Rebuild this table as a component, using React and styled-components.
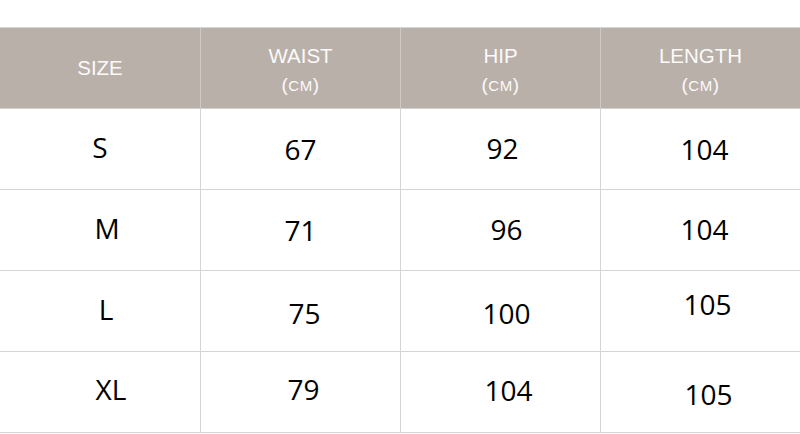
import React from 'react'
import styled, { createGlobalStyle } from 'styled-components'

const GlobalStyle = createGlobalStyle`
  html, body {
    margin: 0;
    padding: 0;
    background: #ffffff;
  }
`;

const Page = styled.div`
  width: 800px;
  height: 434px;
  padding-top: 27px;
  box-sizing: border-box;
  overflow: hidden;
`;

const Table = styled.div`
  display: grid;
  grid-template-columns: repeat(4, 200px);
  grid-auto-rows: 81px;
  border-top: 1px solid #d4d4d4;
`;

const HeadCell = styled.div`
  box-sizing: border-box;
  background: #b9b0a9;
  border-bottom: 1px solid #d2d2d2;
  border-left: ${p => (p.first ? 'none' : '1px solid #cfcac6')};
  display: flex;
  flex-direction: column;
  align-items: center;
  justify-content: center;
  color: #fbfaf9;
  font-family: "Liberation Sans", Arial, sans-serif;
  font-size: 20.5px;
  line-height: 30px;
  padding-top: ${p => (p.single ? '0' : '5px')};
`;

const Unit = styled.span`
  font-size: 19px;
  line-height: 28px;
  letter-spacing: 0.5px;
  small {
    font-size: 15px;
  }
`;

const Cell = styled.div`
  box-sizing: border-box;
  border-bottom: 1px solid #d4d4d4;
  border-left: ${p => (p.first ? 'none' : '1px solid #d4d4d4')};
  display: flex;
  align-items: center;
  justify-content: center;
  font-family: "Open Sans", sans-serif;
  font-size: 28px;
  color: #000;
`;

const Value = styled.span`
  display: block;
  line-height: 1;
`;

const heads = ['WAIST', 'HIP', 'LENGTH'];

const rows = [
  [['S', 0, -2], ['67', 0, 0], ['92', 2, -1], ['104', 4, 0]],
  [['M', 7, -2], ['71', 0, 0], ['96', 6, -1], ['104', 4, -1]],
  [['L', 6, -2], ['75', 4, 2], ['100', 6, 2], ['105', 7, -7]],
  [['XL', 11, -3], ['79', 3, -3], ['104', 8, -2], ['105', 8, 2]],
];

export default function App() {
  return (
    <Page>
      <GlobalStyle />
      <Table>
        <HeadCell first single>SIZE</HeadCell>
        {heads.map(h => (
          <HeadCell key={h}>
            <span>{h}</span>
            <Unit>(<small>CM</small>)</Unit>
          </HeadCell>
        ))}
        {rows.map((row, r) =>
          row.map(([text, dx, dy], c) => (
            <Cell key={r + '-' + c} first={c === 0}>
              <Value style={{ transform: `translate(${dx}px, ${dy}px)` }}>{text}</Value>
            </Cell>
          ))
        )}
      </Table>
    </Page>
  )
}
